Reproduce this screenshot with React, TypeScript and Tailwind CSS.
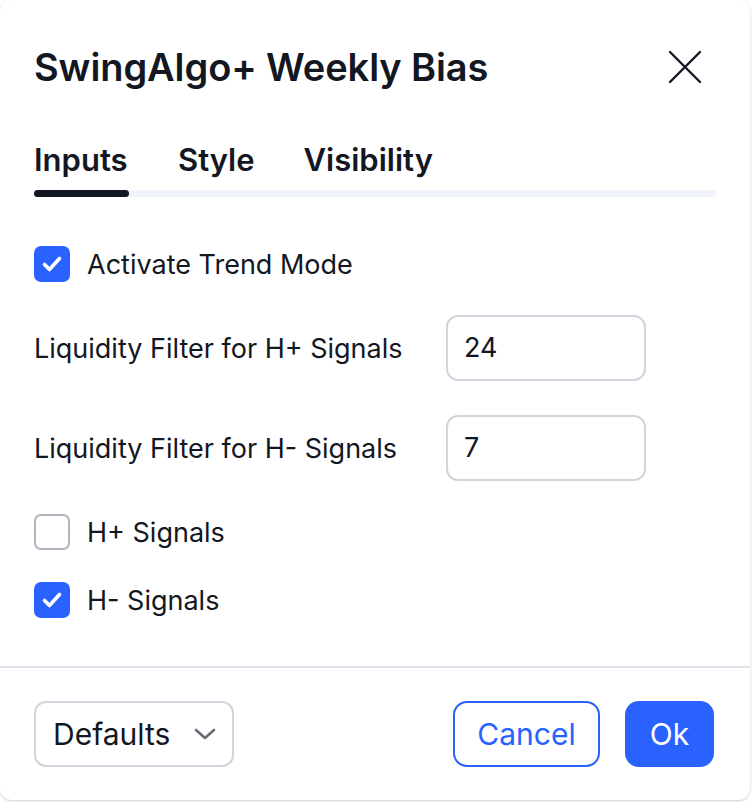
import React from "react";

const font = { fontFamily: "Inter, 'Noto Sans', sans-serif" };

function Check({ checked }: { checked: boolean }) {
  if (checked) {
    return (
      <div className="w-[36px] h-[36px] rounded-[7px] bg-[#2962ff] flex items-center justify-center shrink-0">
        <svg width="36" height="36" viewBox="0 0 36 36" fill="none">
          <path d="M10.5 18.5 L15.5 23.5 L25.5 12.5" stroke="#ffffff" strokeWidth="3.6" strokeLinecap="round" strokeLinejoin="round" />
        </svg>
      </div>
    );
  }
  return <div className="w-[36px] h-[36px] rounded-[7px] border-2 border-[#b2b5be] bg-white shrink-0" />;
}

function CheckRow({ checked, label, className }: { checked: boolean; label: string; className: string }) {
  return (
    <div className={"flex items-center h-[36px] " + className}>
      <Check checked={checked} />
      <span className="ml-[17px] text-[27px] leading-none text-[#131722]">{label}</span>
    </div>
  );
}

function InputRow({ label, value, className }: { label: string; value: string; className: string }) {
  return (
    <div className={"flex items-center h-[66px] " + className}>
      <span className="w-[412px] text-[27px] leading-none text-[#131722]">{label}</span>
      <div className="w-[200px] h-[66px] rounded-[12px] border-2 border-[#d1d4dc] flex items-center pl-[16px] text-[27px] text-[#131722]">
        {value}
      </div>
    </div>
  );
}

export default function App() {
  return (
    <div className="w-[752px] h-[802px] bg-white" style={font}>
      <div className="w-[750px] h-[800px] rounded-[12px] bg-white shadow-[0_1px_3px_rgba(0,0,0,0.2)] flex flex-col">
        <div className="h-[134px] flex items-center justify-between pl-[34px] pr-[48px]">
          <span className="text-[38px] font-semibold text-[#131722] tracking-[-0.1px]">SwingAlgo+ Weekly Bias</span>
          <svg width="34" height="34" viewBox="0 0 34 34" fill="none">
            <path d="M2 2 L32 32 M32 2 L2 32" stroke="#131722" strokeWidth="2.4" strokeLinecap="round" />
          </svg>
        </div>
        <div className="px-[34px]">
          <div className="h-[52px] flex items-center gap-[49px] text-[31px] font-semibold text-[#131722]">
            <span className="w-[95px] whitespace-nowrap">Inputs</span>
            <span>Style</span>
            <span>Visibility</span>
          </div>
          <div className="mt-[4px] h-[7px] rounded-full bg-[#f0f3fa] flex">
            <div className="w-[95px] h-[7px] rounded-full bg-[#131722]" />
          </div>
          <CheckRow checked={true} label="Activate Trend Mode" className="mt-[49px]" />
          <InputRow label="Liquidity Filter for H+ Signals" value="24" className="mt-[33px]" />
          <InputRow label="Liquidity Filter for H- Signals" value="7" className="mt-[34px]" />
          <CheckRow checked={false} label="H+ Signals" className="mt-[33px]" />
          <CheckRow checked={true} label="H- Signals" className="mt-[32px]" />
        </div>
        <div className="mt-[48px] h-[2px] bg-[#e0e3eb]" />
        <div className="mt-[33px] flex items-center justify-between pl-[34px] pr-[36px]">
          <div className="w-[200px] h-[66px] rounded-[12px] border-2 border-[#d1d4dc] flex items-center justify-between pl-[17px] pr-[16px] text-[30px] text-[#131722]">
            <span>Defaults</span>
            <svg width="22" height="12" viewBox="0 0 22 12" fill="none">
              <path d="M2 2 L11 10 L20 2" stroke="#6a6d78" strokeWidth="2.6" strokeLinecap="round" strokeLinejoin="round" />
            </svg>
          </div>
          <div className="flex items-center gap-[25px]">
            <div className="w-[147px] h-[66px] rounded-[14px] border-2 border-[#2962ff] flex items-center justify-center text-[30px] text-[#2962ff]">
              Cancel
            </div>
            <div className="w-[89px] h-[66px] rounded-[14px] bg-[#2962ff] flex items-center justify-center text-[30px] text-white">
              Ok
            </div>
          </div>
        </div>
      </div>
    </div>
  );
}
